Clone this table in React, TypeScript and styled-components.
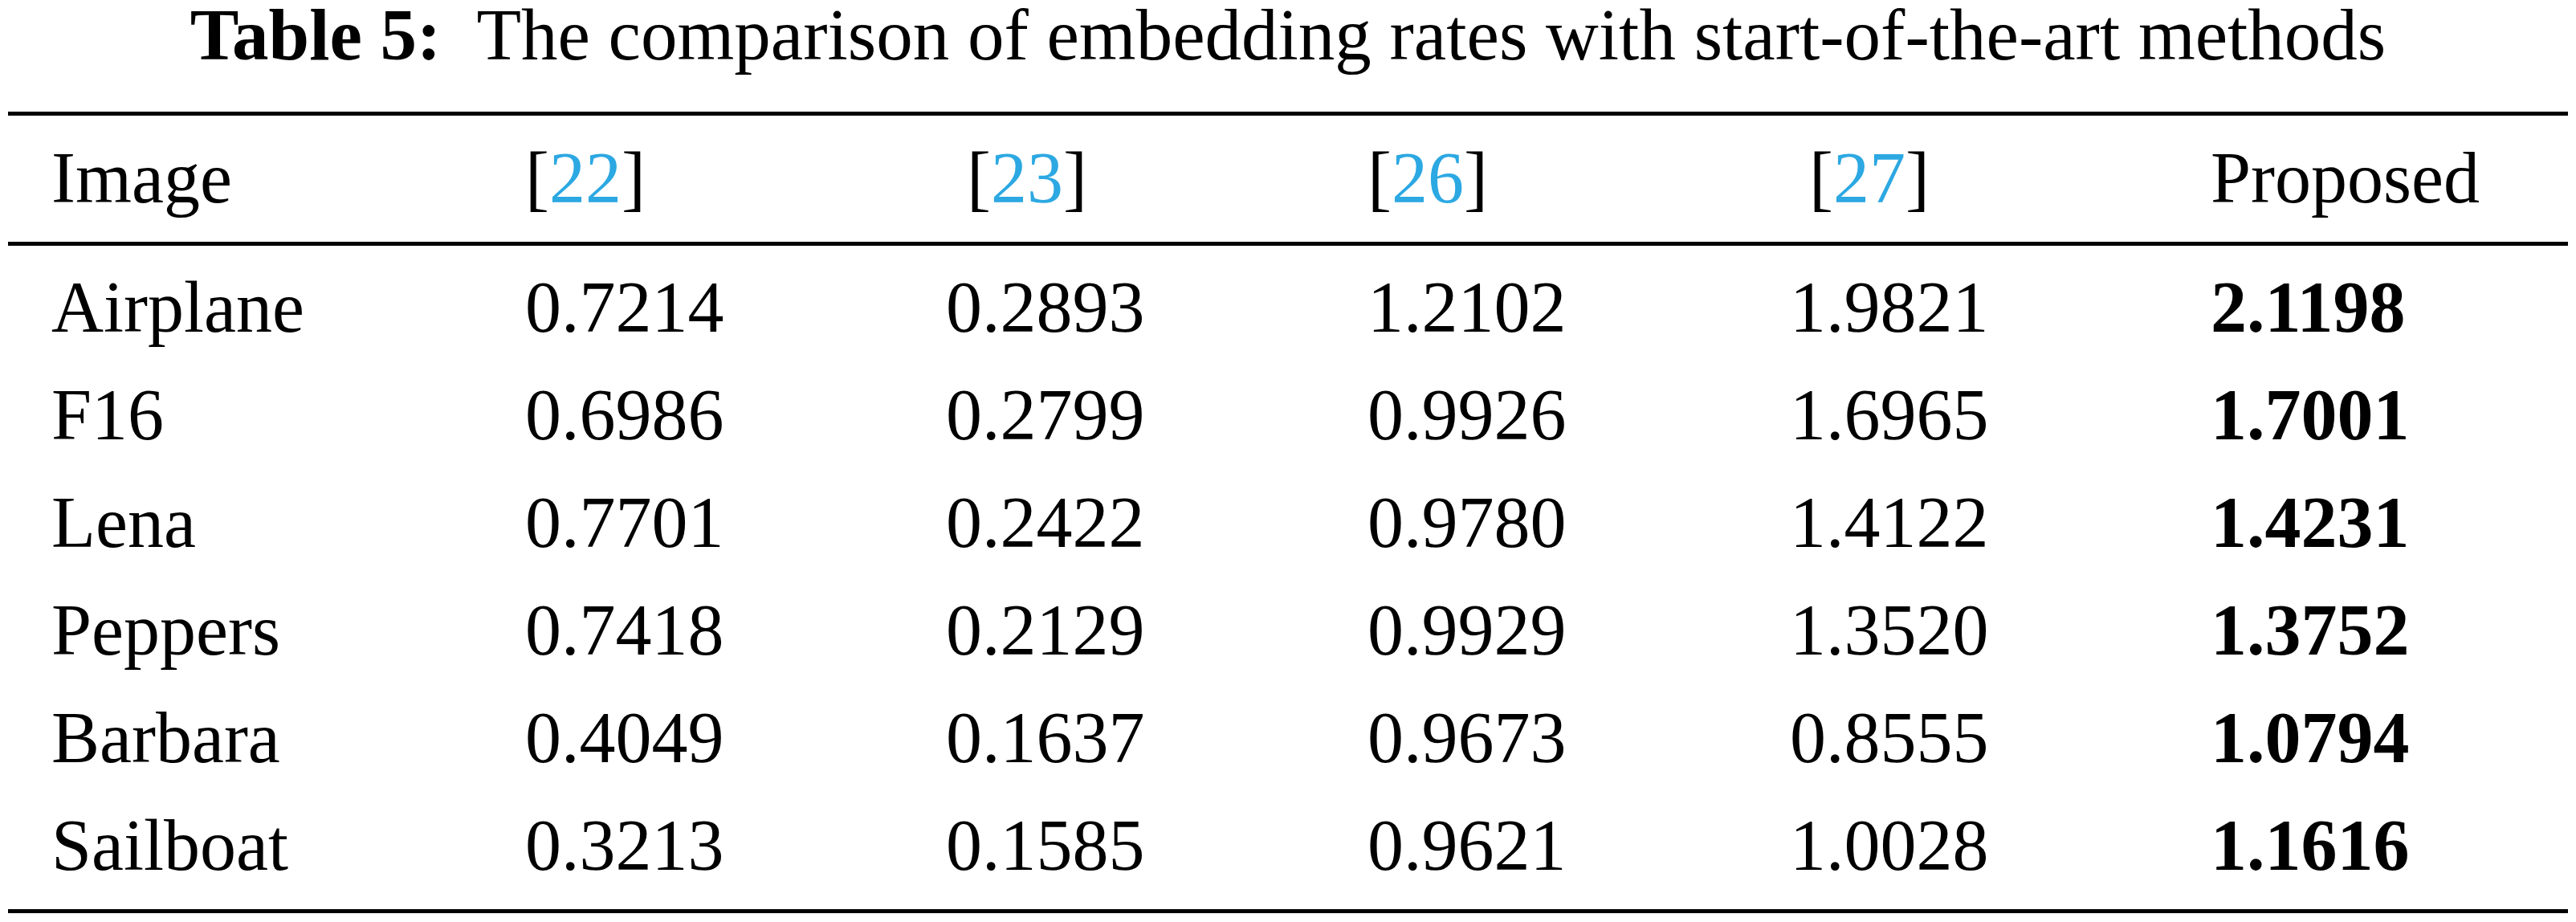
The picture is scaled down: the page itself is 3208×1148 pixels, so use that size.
import React from "react";
import styled, { createGlobalStyle } from "styled-components";

const GlobalStyle = createGlobalStyle`
  html, body {
    margin: 0;
    padding: 0;
    background: #ffffff;
  }
  body {
    font-family: "Liberation Serif", "Times New Roman", serif;
    color: #000000;
  }
`;

const Page = styled.div`
  padding: 0 10px;
  width: 3188px;
`;

const Caption = styled.div`
  font-size: 91px;
  line-height: 88px;
  height: 88px;
  text-align: center;
  white-space: nowrap;
  margin-bottom: 51px;
`;

const CaptionLabel = styled.span`
  font-weight: 700;
  margin-right: 44px;
`;

const Table = styled.div`
  border-top: 5px solid #000;
  border-bottom: 5px solid #000;
  font-size: 90px;
`;

const Row = styled.div<{ $head?: boolean }>`
  display: grid;
  grid-template-columns: 590px 524px 525px 526px 524px 1fr;
  padding-left: 54px;
  line-height: ${(p) => (p.$head ? "100px" : "134px")};
  height: ${(p) => (p.$head ? "100px" : "134px")};
  white-space: nowrap;
`;

const HeadSection = styled.div`
  padding: 28px 0 29px;
  border-bottom: 5px solid #000;
`;

const BodySection = styled.div`
  padding: 10px 0 12px;
`;

const Cell = styled.div<{ $indent?: number; $bold?: boolean }>`
  padding-left: ${(p) => p.$indent ?? 0}px;
  font-weight: ${(p) => (p.$bold ? 700 : 400)};
`;

const Ref = styled.span`
  color: #2ca8e2;
`;

const refs: { id: string; indent: number }[] = [
  { id: "22", indent: 0 },
  { id: "23", indent: 26 },
  { id: "26", indent: 0 },
  { id: "27", indent: 24 },
];

const rows: string[][] = [
  ["Airplane", "0.7214", "0.2893", "1.2102", "1.9821", "2.1198"],
  ["F16", "0.6986", "0.2799", "0.9926", "1.6965", "1.7001"],
  ["Lena", "0.7701", "0.2422", "0.9780", "1.4122", "1.4231"],
  ["Peppers", "0.7418", "0.2129", "0.9929", "1.3520", "1.3752"],
  ["Barbara", "0.4049", "0.1637", "0.9673", "0.8555", "1.0794"],
  ["Sailboat", "0.3213", "0.1585", "0.9621", "1.0028", "1.1616"],
];

export default function App() {
  return (
    <>
      <GlobalStyle />
      <Page>
        <Caption>
          <CaptionLabel>Table 5:</CaptionLabel>
          The comparison of embedding rates with start-of-the-art methods
        </Caption>
        <Table>
          <HeadSection>
            <Row $head>
              <Cell>Image</Cell>
              {refs.map((r) => (
                <Cell key={r.id} $indent={r.indent}>
                  [<Ref>{r.id}</Ref>]
                </Cell>
              ))}
              <Cell>Proposed</Cell>
            </Row>
          </HeadSection>
          <BodySection>
            {rows.map((r) => (
              <Row key={r[0]}>
                {r.map((v, i) => (
                  <Cell key={i} $bold={i === r.length - 1}>
                    {v}
                  </Cell>
                ))}
              </Row>
            ))}
          </BodySection>
        </Table>
      </Page>
    </>
  );
}
